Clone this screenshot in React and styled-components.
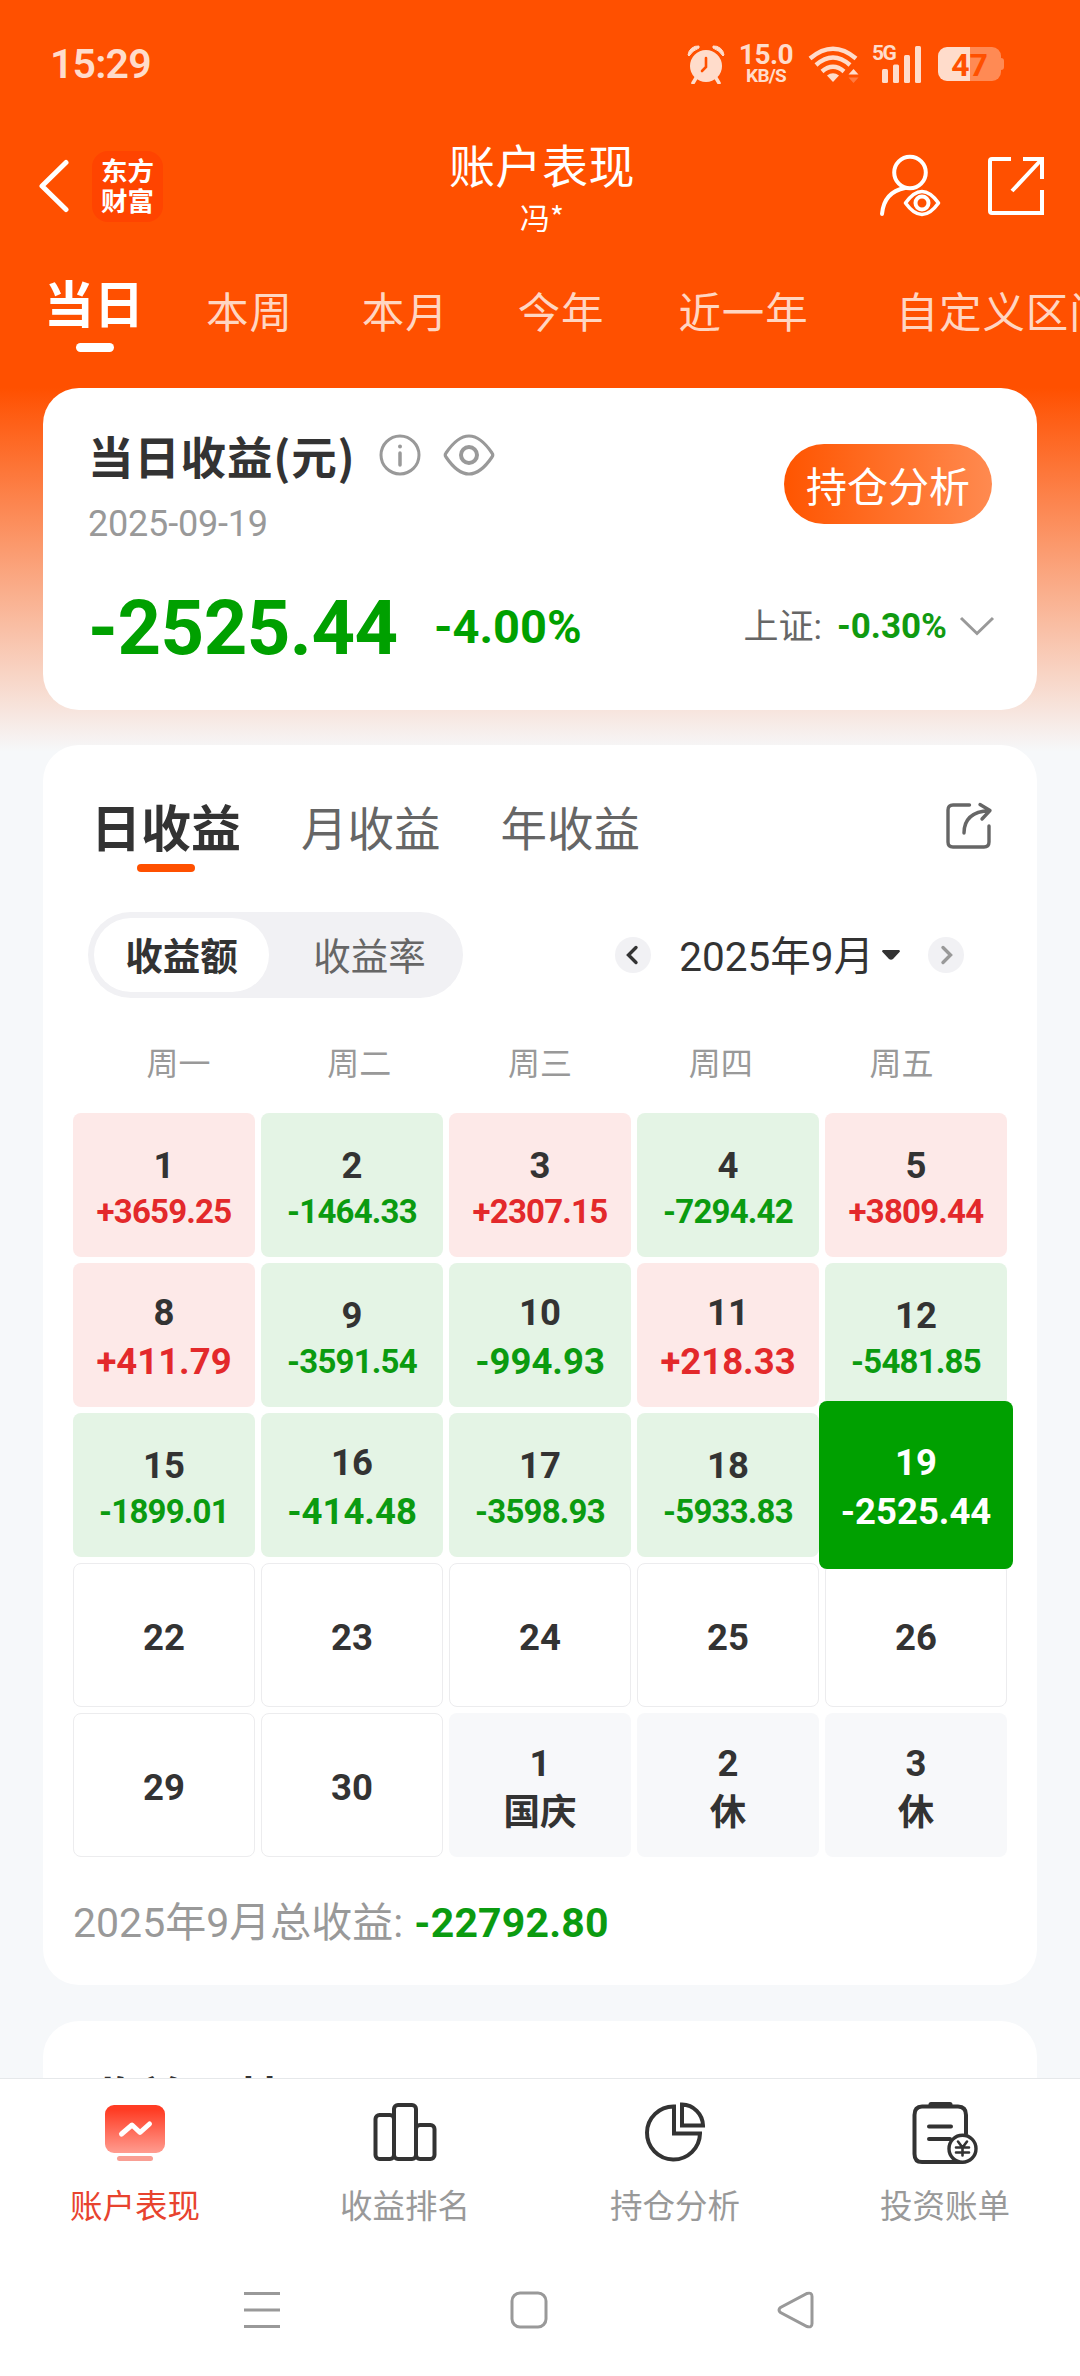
import React from "react"
import styled, { createGlobalStyle, css } from "styled-components"

const GlobalStyle = createGlobalStyle`
  * {
    box-sizing: border-box;
  }

  body {
    margin: 0;
    font-family: Roboto, "Noto Sans CJK SC", sans-serif;
    color: #333;
  }

  svg {
    display: block;
    flex: none;
  }
`

const days = [
  { day: 1, value: "+3659.25" },
  { day: 2, value: "-1464.33" },
  { day: 3, value: "+2307.15" },
  { day: 4, value: "-7294.42" },
  { day: 5, value: "+3809.44" },
  { day: 8, value: "+411.79" },
  { day: 9, value: "-3591.54" },
  { day: 10, value: "-994.93" },
  { day: 11, value: "+218.33" },
  { day: 12, value: "-5481.85" },
  { day: 15, value: "-1899.01" },
  { day: 16, value: "-414.48" },
  { day: 17, value: "-3598.93" },
  { day: 18, value: "-5933.83" },
  { day: 19, value: "-2525.44", selected: true },
  { day: 22 },
  { day: 23 },
  { day: 24 },
  { day: 25 },
  { day: 26 },
  { day: 29 },
  { day: 30 },
  { day: 1, holiday: "国庆" },
  { day: 2, holiday: "休" },
  { day: 3, holiday: "休" },
]

const weekdays = ["周一", "周二", "周三", "周四", "周五"]

const getKind = ({ value, holiday, selected }) => {
  if (selected) return "selected"
  if (holiday) return "rest"
  if (!value) return "empty"
  return value.startsWith("+") ? "up" : "down"
}

const StatusIcons = () => (
  <StatusRight>
    <svg width="38" height="40" viewBox="0 0 38 40" fill="#ffdccb">
      <circle cx="19" cy="22" r="16" />
      <path d="M1 11A10 10 0 0 1 12 2L12 4A20 20 0 0 0 2 12ZM37 11A10 10 0 0 0 26 2L26 4A20 20 0 0 1 36 12Z" stroke="#ffdccb" strokeWidth="1" />
      <path d="M9 34l-3 5M29 34l3 5" stroke="#ffdccb" strokeWidth="3.5" strokeLinecap="round" />
      <path d="M19 14v9l-4 4" fill="none" stroke="#ff5000" strokeWidth="2.6" strokeLinecap="round" />
    </svg>
    <Speed>
      <SpeedValue>15.0</SpeedValue>
      <SpeedUnit>KB/S</SpeedUnit>
    </Speed>
    <svg width="52" height="38" viewBox="0 0 52 38" fill="none" stroke="#ffdccb" strokeWidth="4.4">
      <path d="M2 13.5Q25 -6 48 13.5M8 20Q25 5 42 20M14 26.500Q25 17 36 26.500" />
      <path d="M19 30.500Q25 26 31 30.500L25 37Z" fill="#ffdccb" stroke="none" />
      <path d="M45.500 24l5 5.500h-10z" fill="#ffdccb" stroke="none" />
      <path d="M45.500 38l5 -5.500h-10z" fill="#ff7a40" stroke="none" />
    </svg>
    <Signal>
      <SignalLabel>5G</SignalLabel>
      <svg width="50" height="38" viewBox="0 0 50 38" fill="#ffdccb">
        <rect x="10" y="24" width="6" height="14" rx="1.500" />
        <rect x="21" y="19.500" width="6" height="18.500" rx="1.500" />
        <rect x="32" y="10" width="6" height="28" rx="1.500" />
        <rect x="43" y="1" width="6" height="37" rx="1.500" />
      </svg>
    </Signal>
    <Battery>47</Battery>
  </StatusRight>
)

const BackIcon = () => (
  <svg width="32" height="54" viewBox="0 0 32 54" fill="none" stroke="#fff" strokeWidth="5" strokeLinecap="round" strokeLinejoin="round">
    <path d="M28 3.500L4 27l24 23.500" />
  </svg>
)

const ProfileIcon = () => (
  <svg width="64" height="64" viewBox="0 0 64 64" fill="none" stroke="#fff" strokeWidth="4" strokeLinecap="round" strokeLinejoin="round">
    <circle cx="32" cy="18.500" r="15.800" />
    <path d="M4 60Q6 38 27 34" />
    <path d="M27.500 49Q44 26 60.500 49Q44 72 27.500 49Z" strokeWidth="3.600" />
    <circle cx="44" cy="49" r="6.500" />
  </svg>
)

const OpenIcon = () => (
  <svg width="60" height="62" viewBox="0 0 60 62" fill="none" stroke="#fff" strokeWidth="4">
    <path d="M25 4H6Q4 4 4 6V56Q4 58 6 58H56V35M37 4H56V24M56 4L26 36" />
  </svg>
)

const InfoIcon = () => (
  <svg width="42" height="42" viewBox="0 0 42 42" fill="none" stroke="#999" strokeWidth="3">
    <circle cx="21" cy="21" r="19" />
    <path d="M21 19v12" strokeWidth="3.500" strokeLinecap="round" />
    <circle cx="21" cy="12.500" r="2" fill="#999" stroke="none" />
  </svg>
)

const EyeIcon = () => (
  <svg width="52" height="42" viewBox="0 0 52 42" fill="none" stroke="#999" strokeWidth="3.200">
    <path d="M3 23Q1.500 21 3 19Q26 -15 49 19Q50.500 21 49 23Q26 57 3 23Z" />
    <circle cx="26" cy="21" r="8" strokeWidth="4" />
  </svg>
)

const ShareIcon = () => (
  <svg width="48" height="48" viewBox="0 0 48 48" fill="none" stroke="#666" strokeWidth="3.400" strokeLinecap="round" strokeLinejoin="round">
    <path d="M24.500 3H8Q3 3 3 8V40Q3 45 8 45H39Q44 45 44 40V24" />
    <path d="M19 31Q19 10 44.500 8.500M35 2.500L45 8.500L37 17" />
  </svg>
)

const ArrowButton = ({ next }) => (
  <Round>
    <svg width="36" height="36" viewBox="0 0 36 36" fill="none" stroke={next ? "#999" : "#333"} strokeWidth="3.400" strokeLinecap="round">
      <path d={next ? "M15 10.500l7.500 7.500l-7.500 7.500" : "M21 10.500l-7.500 7.500l7.500 7.500"} />
    </svg>
  </Round>
)

const MonitorIcon = () => (
  <svg width="66" height="66" viewBox="0 0 66 66">
    <defs>
      <linearGradient id="monitor" x1="0" y1="0" x2="0" y2="1">
        <stop offset="0.1" stopColor="#ff3c24" />
        <stop offset="1" stopColor="#ff9c90" />
      </linearGradient>
    </defs>
    <rect x="3" y="5" width="60" height="48" rx="9" fill="url(#monitor)" />
    <rect x="15" y="56" width="36" height="5" rx="2.500" fill="#f99f94" />
    <path d="M19.500 34L30 25l8 7.500L47.500 24" fill="none" stroke="#fff" strokeWidth="5" strokeLinecap="round" strokeLinejoin="round" />
  </svg>
)

const RankIcon = () => (
  <svg width="66" height="66" viewBox="0 0 66 66" fill="none" stroke="#333" strokeWidth="4">
    <rect x="3.500" y="15" width="18.500" height="44" rx="4" />
    <rect x="22" y="5" width="22" height="54" rx="4" />
    <rect x="44" y="25" width="18.500" height="34" rx="4" />
  </svg>
)

const PieIcon = () => (
  <svg width="66" height="66" viewBox="0 0 66 66" fill="none" stroke="#333" strokeWidth="4">
    <path d="M32 6.500A26.500 26.500 0 1 0 58 33.500H32Z" />
    <path d="M40 4.500A21.500 21.500 0 0 1 61 25.500H40Z" />
  </svg>
)

const BillIcon = () => (
  <svg width="66" height="66" viewBox="0 0 66 66" fill="none" stroke="#333" strokeWidth="4" strokeLinecap="round">
    <path d="M54 34V15Q54 6.500 46 6.500H10Q2.500 6.500 2.500 15V54Q2.500 62 10 62H50" />
    <path d="M19 4.500H38" strokeWidth="5" />
    <path d="M17 26.500H39M17 39H38" />
    <circle cx="50.500" cy="48.700" r="13.500" fill="#fff" strokeWidth="3.400" />
    <path d="M46 41.500l4.500 6l4.500 -6M50.500 47.500v8M44 47.500h13M44 52.500h13" strokeWidth="2.600" />
  </svg>
)

const navItems = [
  { label: "账户表现", Icon: MonitorIcon, active: true },
  { label: "收益排名", Icon: RankIcon },
  { label: "持仓分析", Icon: PieIcon },
  { label: "投资账单", Icon: BillIcon },
]

const App = () => (
  <Screen>
    <GlobalStyle />
    <StatusBar>
      <Clock>15:29</Clock>
      <StatusIcons />
    </StatusBar>

    <Header>
      <HeaderSide>
        <BackIcon />
        <Logo>
          <span>东方</span>
          <span>财富</span>
        </Logo>
      </HeaderSide>
      <HeaderTitle>
        <Title>账户表现</Title>
        <Account>冯*</Account>
      </HeaderTitle>
      <HeaderSide $end>
        <ProfileIcon />
        <OpenIcon />
      </HeaderSide>
    </Header>

    <PeriodTabs>
      <ActivePeriod>当日</ActivePeriod>
      <Period>本周</Period>
      <Period>本月</Period>
      <Period>今年</Period>
      <Period $indent={5}>近一年</Period>
      <Period $indent={18}>自定义区间</Period>
    </PeriodTabs>

    <Content>
      <SummaryCard>
        <SummaryTop>
          <div>
            <SummaryHeading>
              <SummaryTitle>当日收益(元)</SummaryTitle>
              <InfoIcon />
              <EyeIcon />
            </SummaryHeading>
            <SummaryDate>2025-09-19</SummaryDate>
          </div>
          <AnalyzeButton>持仓分析</AnalyzeButton>
        </SummaryTop>
        <SummaryBottom>
          <Profit>-2525.44</Profit>
          <Percent>-4.00%</Percent>
          <IndexLabel>上证:</IndexLabel>
          <IndexValue>-0.30%</IndexValue>
          <svg width="36" height="20" viewBox="0 0 36 20" fill="none" stroke="#999" strokeWidth="3">
            <path d="M2 2l16 15.500L34 2" />
          </svg>
        </SummaryBottom>
      </SummaryCard>

      <CalendarCard>
        <ProfitTabs>
          <ProfitTab $active>日收益</ProfitTab>
          <ProfitTab>月收益</ProfitTab>
          <ProfitTab>年收益</ProfitTab>
          <ShareIcon />
        </ProfitTabs>

        <Controls>
          <Segment>
            <SegmentItem $active>收益额</SegmentItem>
            <SegmentItem>收益率</SegmentItem>
          </Segment>
          <MonthPicker>
            <ArrowButton />
            <Month>
              <MonthText>2025年9月</MonthText>
              <svg width="18" height="10" viewBox="0 0 18 10" fill="#333">
                <path d="M1 0H17Q18.500 1 17.500 2L11 9Q9 10.500 7 9L.5 2Q-.5 1 1 0Z" />
              </svg>
            </Month>
            <ArrowButton next />
          </MonthPicker>
        </Controls>

        <Weekdays>
          {weekdays.map(name => (
            <span key={name}>{name}</span>
          ))}
        </Weekdays>

        <Calendar>
          {days.map((item, i) => (
            <Day key={i} $kind={getKind(item)}>
              <DayNumber>{item.day}</DayNumber>
              {item.value && (
                <DayValue $small={item.value.length > 7 && !item.selected}>
                  {item.value}
                </DayValue>
              )}
              {item.holiday && <DayValue>{item.holiday}</DayValue>}
            </Day>
          ))}
        </Calendar>

        <Total>
          2025年9月总收益: <TotalValue>-22792.80</TotalValue>
        </Total>
      </CalendarCard>

      <NextCard>收益贡献</NextCard>
    </Content>

    <BottomNav>
      {navItems.map(({ label, Icon, active }) => (
        <NavItem key={label} $active={active}>
          <Icon />
          {label}
        </NavItem>
      ))}
    </BottomNav>

    <SystemNav>
      <svg width="36" height="38" viewBox="0 0 36 38" stroke="#999" strokeWidth="3">
        <path d="M0 2.500H36M0 19H36M0 35.500H36" />
      </svg>
      <svg width="38" height="38" viewBox="0 0 38 38" fill="none" stroke="#999" strokeWidth="3">
        <rect x="2" y="2" width="34" height="34" rx="8" />
      </svg>
      <svg width="38" height="38" viewBox="0 0 38 38" fill="none" stroke="#999" strokeWidth="3">
        <path d="M3.500 16.500Q0.500 19 3.500 21.500L30 35.500Q35 37 35 32.500V5.500Q35 1 30 2.500Z" />
      </svg>
    </SystemNav>
  </Screen>
)

export default App

const Screen = styled.div`
  display: flex;
  flex-direction: column;
  width: 1080px;
  height: 2376px;
  overflow: hidden;
  background: linear-gradient(#ff5000 388px, #f6f8fa 752px);
`

const StatusBar = styled.div`
  display: flex;
  justify-content: space-between;
  align-items: center;
  height: 128px;
  padding: 0 76px 0 50px;
  color: #ffdccb;
`

const Clock = styled.div`
  font-size: 41px;
  font-weight: 600;
  letter-spacing: -0.8px;
`

const StatusRight = styled.div`
  display: flex;
  align-items: center;
`

const Speed = styled.div`
  display: flex;
  flex-direction: column;
  align-items: center;
  width: 56px;
  margin: 0 14px 0 13px;
  font-weight: 700;
`

const SpeedValue = styled.span`
  font-size: 28px;
  line-height: 22px;
  letter-spacing: -0.5px;
`

const SpeedUnit = styled.span`
  font-size: 19px;
  line-height: 19px;
  letter-spacing: -0.8px;
`

const Signal = styled.div`
  position: relative;
  margin: 0 16px 0 12px;
`

const SignalLabel = styled.span`
  position: absolute;
  left: 0;
  top: -2px;
  font-size: 21px;
  font-weight: 700;
  line-height: 21px;
  letter-spacing: -1.5px;
`

const Battery = styled.div`
  position: relative;
  width: 63px;
  height: 34px;
  margin-right: 3px;
  border-radius: 9px;
  background: linear-gradient(90deg, #ffdccb 32px, #ff8a54 32px);
  color: #ff5000;
  font-size: 32px;
  font-weight: 700;
  line-height: 37px;
  text-align: center;

  &::after {
    content: "";
    position: absolute;
    right: -3px;
    top: 11px;
    width: 3px;
    height: 12px;
    border-radius: 0 3px 3px 0;
    background: #ff8a54;
  }
`

const Header = styled.header`
  display: flex;
  justify-content: space-between;
  height: 122px;
  padding: 0 34px 0 38px;
  color: #fff;
`

const HeaderSide = styled.div`
  display: flex;
  align-items: center;
  gap: ${p => (p.$end ? "44px" : "22px")};
  width: 300px;
  height: 116px;
  justify-content: ${p => (p.$end ? "flex-end" : "flex-start")};
`

const Logo = styled.div`
  display: flex;
  flex-direction: column;
  align-items: center;
  justify-content: center;
  width: 71px;
  height: 71px;
  padding-bottom: 2px;
  border-radius: 16px;
  background: #ff4400;
  font-family: "Noto Sans CJK SC", sans-serif;
  font-size: 26.5px;
  font-weight: 700;
  line-height: 30px;
`

const HeaderTitle = styled.div`
  text-align: center;
  font-family: "Noto Sans CJK SC", sans-serif;
`

const Title = styled.div`
  padding-top: 8px;
  font-size: 46px;
  line-height: 54px;
  letter-spacing: 0.5px;
`

const Account = styled.div`
  font-size: 30px;
  line-height: 53px;
`

const PeriodTabs = styled.nav`
  display: flex;
  height: 138px;
  padding-left: 44px;
  white-space: nowrap;
  font-family: "Noto Sans CJK SC", sans-serif;
`

const ActivePeriod = styled.div`
  position: relative;
  width: 98px;
  margin-right: 64px;
  color: #fff;
  font-size: 50px;
  font-weight: 700;
  line-height: 103px;

  &::after {
    content: "";
    position: absolute;
    left: 32px;
    top: 93px;
    width: 38px;
    height: 9px;
    border-radius: 5px;
    background: #fff;
  }
`

const Period = styled.div`
  flex: none;
  margin-left: ${p => p.$indent || 0}px;
  margin-right: 69px;
  color: #ffd6c2;
  font-size: 42.5px;
  line-height: 119px;
  letter-spacing: 0.9px;
`

const Content = styled.main`
  display: flex;
  flex-direction: column;
  gap: 36px;
  height: 1690px;
  padding: 0 43px;
  overflow: hidden;
`

const Card = styled.section`
  flex: none;
  border-radius: 36px;
  background: #fff;
`

const SummaryCard = styled(Card)`
  height: 322px;
  padding: 36px 42px 0 45px;
`

const SummaryTop = styled.div`
  display: flex;
  justify-content: space-between;
  height: 145px;
`

const SummaryHeading = styled.div`
  display: flex;
  align-items: center;
  height: 62px;
`

const SummaryTitle = styled.h1`
  margin: 0 23px 0 0;
  font-family: "Noto Sans CJK SC", sans-serif;
  font-size: 45.5px;
  font-weight: 700;
  line-height: 62px;
  letter-spacing: 0.8px;

  & + svg {
    margin-right: 22px;
  }
`

const SummaryDate = styled.div`
  color: #999;
  font-size: 36px;
  line-height: 76px;
  letter-spacing: -0.2px;
`

const AnalyzeButton = styled.div`
  width: 208px;
  height: 80px;
  margin: 20px 3px 0 0;
  border-radius: 40px;
  background: linear-gradient(90deg, #ff5500, #ff8a50);
  color: #fff;
  font-family: "Noto Sans CJK SC", sans-serif;
  font-size: 41px;
  line-height: 80px;
  text-align: center;
`

const SummaryBottom = styled.div`
  display: flex;
  align-items: center;
  height: 114px;
`

const Profit = styled.div`
  width: 346px;
  padding-top: 3px;
  color: #00a000;
  font-size: 76px;
  font-weight: 700;
  letter-spacing: -0.5px;
`

const Percent = styled.div`
  flex: 1;
  color: #00a000;
  font-size: 47px;
  font-weight: 700;
`

const IndexLabel = styled.div`
  padding-bottom: 5px;
  color: #666;
  font-size: 35px;
`

const IndexValue = styled.div`
  margin: 0 12px 0 15px;
  color: #109a10;
  font-size: 35px;
  font-weight: 700;
`

const CalendarCard = styled(Card)`
  height: 1240px;
  margin-top: -1px;
  padding: 46px 30px 0;
`

const ProfitTabs = styled.div`
  display: flex;
  height: 121px;
  padding: 0 14px 0 18px;
  font-family: "Noto Sans CJK SC", sans-serif;

  svg {
    margin: 11px 0 0 auto;
  }
`

const ProfitTab = styled.div`
  position: relative;
  margin-right: 60px;
  color: #666;
  font-size: 46.5px;
  line-height: 69px;

  ${p =>
    p.$active &&
    css`
      color: #333;
      font-size: 50px;
      font-weight: 700;

      &::after {
        content: "";
        position: absolute;
        left: 46px;
        top: 73px;
        width: 58px;
        height: 8px;
        border-radius: 4px;
        background: #ff5000;
      }
    `}
`

const Controls = styled.div`
  display: flex;
  align-items: center;
  justify-content: space-between;
  height: 86px;
  padding: 0 43px 0 15px;
`

const Segment = styled.div`
  display: flex;
  justify-content: space-between;
  width: 375px;
  height: 86px;
  padding: 6px;
  border-radius: 43px;
  background: #f1f1f4;
  font-family: "Noto Sans CJK SC", sans-serif;
`

const SegmentItem = styled.div`
  width: 175px;
  border-radius: 37px;
  background: ${p => (p.$active ? "#fff" : "none")};
  color: ${p => (p.$active ? "#333" : "#666")};
  font-size: 37.5px;
  font-weight: ${p => (p.$active ? 700 : 400)};
  line-height: 71px;
  text-align: center;
`

const MonthPicker = styled.div`
  display: flex;
  align-items: center;
  gap: 28px;
`

const Round = styled.div`
  width: 36px;
  height: 36px;
  border-radius: 50%;
  background: #f1f1f4;
`

const Month = styled.div`
  display: flex;
  align-items: center;
  gap: 8px;
`

const MonthText = styled.span`
  padding-bottom: 4px;
  font-size: 40.5px;
`

const Weekdays = styled.div`
  display: grid;
  grid-template-columns: repeat(5, 1fr);
  height: 115px;
  padding: 0 15px;
  color: #999;
  font-family: "Noto Sans CJK SC", sans-serif;
  font-size: 32px;
  line-height: 126px;
  text-align: center;
`

const Calendar = styled.div`
  display: grid;
  grid-template-columns: repeat(5, 182px);
  grid-auto-rows: 144px;
  gap: 6px;
`

const dayKinds = {
  up: css`
    background: #fde9e8;
    color: #e3292b;
  `,
  down: css`
    background: #e4f4e5;
    color: #0b9b10;
  `,
  empty: css`
    padding-top: 5px;
    border: 1px solid #ececee;
  `,
  rest: css`
    padding-top: 3px;
    background: #f7f8fa;
  `,
  selected: css`
    z-index: 1;
    margin: -12px -6px;
    background: #00a000;
    color: #fff;
  `,
}

const DayNumber = styled.div`
  font-size: 36.5px;
  line-height: 52px;
`

const Day = styled.div`
  display: flex;
  flex-direction: column;
  align-items: center;
  justify-content: center;
  padding-top: 1px;
  border-radius: 8px;
  font-weight: 700;
  ${p => dayKinds[p.$kind]}

  ${DayNumber} {
    color: ${p => (p.$kind === "selected" ? "#fff" : "#333")};
  }
`

const DayValue = styled.div`
  font-size: ${p => (p.$small ? "33px" : "36.5px")};
  line-height: ${p => (p.$small ? "39px" : "45px")};
  letter-spacing: ${p => (p.$small ? "-0.8px" : "0")};
`

const Total = styled.div`
  color: #999;
  font-size: 41px;
  line-height: 132px;
`

const TotalValue = styled.span`
  margin-left: 1px;
  color: #0b9b10;
  font-weight: 700;
  letter-spacing: 0.2px;
`

const NextCard = styled(Card)`
  height: 300px;
  padding: 44px 47px;
  font-family: "Noto Sans CJK SC", sans-serif;
  font-size: 48px;
  font-weight: 700;
  line-height: 62px;
`

const BottomNav = styled.nav`
  display: grid;
  grid-template-columns: repeat(4, 1fr);
  height: 172px;
  padding-top: 21px;
  border-top: 1px solid #e6e8ea;
  background: #fff;
`

const NavItem = styled.div`
  display: flex;
  flex-direction: column;
  align-items: center;
  color: ${p => (p.$active ? "#e8432e" : "#999")};
  font-family: "Noto Sans CJK SC", sans-serif;
  font-size: 32.5px;
  line-height: 76px;
`

const SystemNav = styled.div`
  display: flex;
  justify-content: space-between;
  flex: 1;
  padding: 41px 265px 0 244px;
  background: #fff;
`
